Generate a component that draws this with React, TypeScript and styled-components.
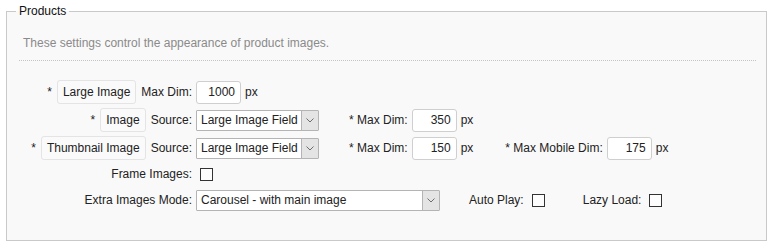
import React from 'react';
import styled, { createGlobalStyle } from 'styled-components';

const GlobalStyle = createGlobalStyle`
  html, body {
    margin: 0;
    padding: 0;
    background: #ffffff;
  }
  body {
    font-family: 'Liberation Sans', Arial, sans-serif;
    font-size: 12px;
    color: #222;
  }
`;

const Page = styled.div`
  padding: 4px 6px 6px 6px;
`;

const FieldSet = styled.fieldset`
  margin: 0;
  padding: 0 10px 26px 12px;
  border: 1px solid #c9c9c9;
  background: #f9f9f9;
  min-width: 0;
`;

const Legend = styled.legend`
  margin-left: -3px;
  padding: 0 3px;
  font-size: 12px;
  line-height: 14px;
  color: #111;
`;

const Description = styled.p`
  margin: 18px 0 0 4px;
  line-height: 15px;
  color: #8a8a8a;
`;

const Divider = styled.hr`
  margin: 9px 0 17px;
  border: 0;
  border-top: 1px dotted #c4c4c4;
  height: 0;
`;

const FormGrid = styled.div`
  display: grid;
  grid-template-columns: 173px 1fr;
  column-gap: 4px;
`;

const LabelCell = styled.div<{ $h?: number }>`
  display: flex;
  justify-content: flex-end;
  align-items: center;
  gap: 5px;
  height: ${({ $h }) => $h ?? 28}px;
  white-space: nowrap;
`;

const FieldCell = styled.div<{ $h?: number }>`
  display: flex;
  align-items: center;
  gap: 4px;
  height: ${({ $h }) => $h ?? 28}px;
  white-space: nowrap;
`;

const NameTag = styled.span`
  display: inline-flex;
  align-items: center;
  height: 22px;
  padding: 0 5px;
  border: 1px solid #e4e4e4;
  border-radius: 3px;
  background: #fafafa;
`;

const Group = styled.span<{ $offset?: number }>`
  display: inline-flex;
  align-items: center;
  gap: 4px;
  margin-left: ${({ $offset }) => $offset ?? 26}px;
`;

const NumberInput = styled.input`
  box-sizing: border-box;
  width: 45px;
  height: 23px;
  padding: 0 5px 0 2px;
  border: 1px solid #cfcfcf;
  border-radius: 3px;
  background: #fff;
  font: inherit;
  color: #222;
  text-align: right;
`;

const SelectBox = styled.div<{ $w: number }>`
  box-sizing: border-box;
  display: flex;
  align-items: stretch;
  width: ${({ $w }) => $w}px;
  height: 21px;
  border: 1px solid #b4b4b4;
  border-radius: 1px;
  background: #fff;
`;

const SelectText = styled.span`
  flex: 1;
  display: flex;
  align-items: center;
  padding-left: 4px;
  overflow: hidden;
`;

const SelectArrow = styled.span`
  display: flex;
  align-items: center;
  justify-content: center;
  width: 16px;
  border-left: 1px solid #b4b4b4;
  background: #e4e4e4;
`;

const Check = styled.input`
  appearance: none;
  box-sizing: border-box;
  width: 13px;
  height: 13px;
  margin: 0 3px 0 4px;
  border: 1px solid #333;
  background: #fdfdfd;
`;

const Chevron = () => (
  <svg width="8" height="5" viewBox="0 0 8 5">
    <path d="M0.5 0.5 L4 4 L7.5 0.5" fill="none" stroke="#6d6d6d" strokeWidth="1" />
  </svg>
);

const Select = ({ value, width }: { value: string; width: number }) => (
  <SelectBox $w={width}>
    <SelectText>{value}</SelectText>
    <SelectArrow>
      <Chevron />
    </SelectArrow>
  </SelectBox>
);

const Dim = ({ value }: { value: number }) => (
  <>
    <NumberInput defaultValue={value} />
    <span>px</span>
  </>
);

export default function App() {
  return (
    <Page>
      <GlobalStyle />
      <FieldSet>
        <Legend>Products</Legend>
        <Description>These settings control the appearance of product images.</Description>
        <Divider />
        <FormGrid>
          <LabelCell>
            <span>*</span>
            <NameTag>Large Image</NameTag>
            <span>Max Dim:</span>
          </LabelCell>
          <FieldCell>
            <Dim value={1000} />
          </FieldCell>

          <LabelCell>
            <span>*</span>
            <NameTag>Image</NameTag>
            <span>Source:</span>
          </LabelCell>
          <FieldCell>
            <Select value="Large Image Field" width={123} />
            <Group>
              <span>* Max Dim:</span>
              <Dim value={350} />
            </Group>
          </FieldCell>

          <LabelCell>
            <span>*</span>
            <NameTag>Thumbnail Image</NameTag>
            <span>Source:</span>
          </LabelCell>
          <FieldCell>
            <Select value="Large Image Field" width={123} />
            <Group>
              <span>* Max Dim:</span>
              <Dim value={150} />
            </Group>
            <Group $offset={28}>
              <span>* Max Mobile Dim:</span>
              <Dim value={175} />
            </Group>
          </FieldCell>

          <LabelCell $h={24}>Frame Images:</LabelCell>
          <FieldCell $h={24}>
            <Check type="checkbox" />
          </FieldCell>

          <LabelCell>Extra Images Mode:</LabelCell>
          <FieldCell>
            <Select value="Carousel - with main image" width={244} />
            <Group $offset={25}>
              <span>Auto Play:</span>
              <Check type="checkbox" />
            </Group>
            <Group $offset={31}>
              <span>Lazy Load:</span>
              <Check type="checkbox" />
            </Group>
          </FieldCell>
        </FormGrid>
      </FieldSet>
    </Page>
  );
}
